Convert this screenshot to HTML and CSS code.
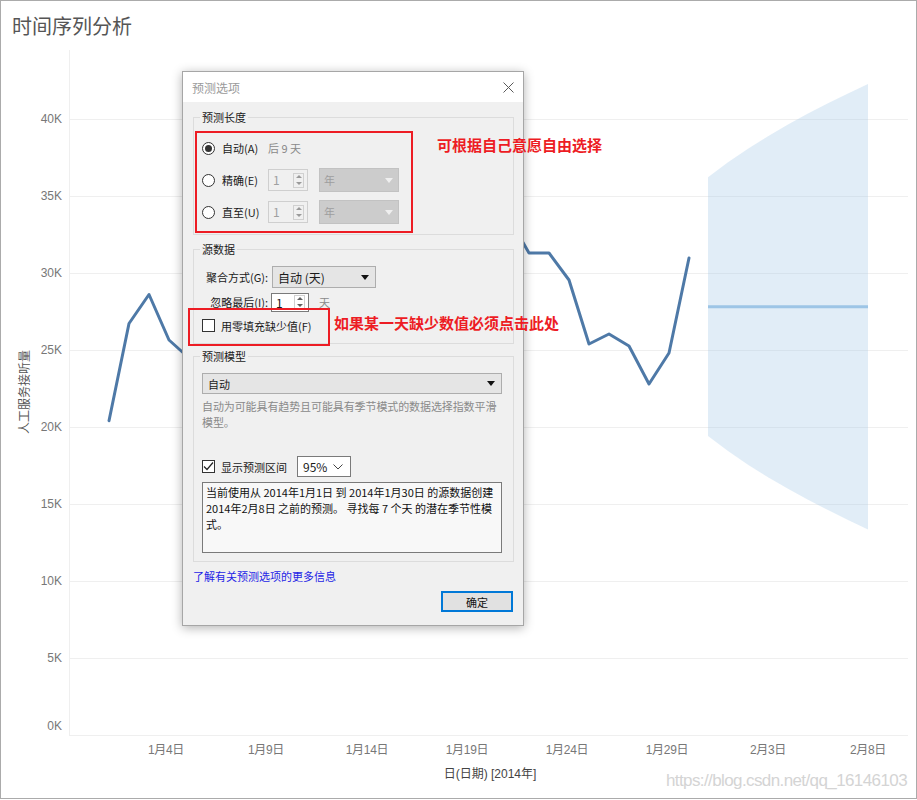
FILE: index.html
```html
<!DOCTYPE html>
<html lang="zh-CN">
<head>
    <meta charset="UTF-8">
    <meta name="viewport" content="width=device-width, initial-scale=1.0">
    <title>时间序列分析</title>
    <link rel="stylesheet" href="styles.css">
</head>
<body>
    <div class="frame">
        <div class="sheet-title">时间序列分析</div>

        <svg class="chart" width="915" height="748" viewBox="1 50 915 748">
            <!-- grid -->
            <g class="grid">
                <line x1="69.5" x2="69.5" y1="50" y2="736"/>
                <line x1="69" x2="908" y1="119.5" y2="119.5"/>
                <line x1="69" x2="908" y1="196.5" y2="196.5"/>
                <line x1="69" x2="908" y1="273.5" y2="273.5"/>
                <line x1="69" x2="908" y1="350.5" y2="350.5"/>
                <line x1="69" x2="908" y1="427.5" y2="427.5"/>
                <line x1="69" x2="908" y1="504.5" y2="504.5"/>
                <line x1="69" x2="908" y1="581.5" y2="581.5"/>
                <line x1="69" x2="908" y1="658.5" y2="658.5"/>
                <line x1="69" x2="908" y1="735.5" y2="735.5"/>
            </g>

            <g class="axis-value">
                <text x="62" y="123">40K</text>
                <text x="62" y="200">35K</text>
                <text x="62" y="277">30K</text>
                <text x="62" y="354">25K</text>
                <text x="62" y="431">20K</text>
                <text x="62" y="508">15K</text>
                <text x="62" y="585">10K</text>
                <text x="62" y="662">5K</text>
                <text x="62" y="730">0K</text>
            </g>
            <text class="axis-title" transform="translate(29 392) rotate(-90)">人工服务接听量</text>

            <g class="axis-date">
                <text x="166" y="754">1月4日</text>
                <text x="266" y="754">1月9日</text>
                <text x="367" y="754">1月14日</text>
                <text x="467" y="754">1月19日</text>
                <text x="567" y="754">1月24日</text>
                <text x="667" y="754">1月29日</text>
                <text x="768" y="754">2月3日</text>
                <text x="868" y="754">2月8日</text>
            </g>
            <text class="axis-title axis-title-x" x="490" y="778">日(日期) [2014年]</text>

            <!-- forecast -->
            <polygon class="band" points="708,177.3 728,162.3 748,148.7 768,136.2 788,124.6 808,113.6 828,103.3 848,93.4 868,84 868,529.4 848,520 828,510.1 808,499.8 788,488.8 768,477.2 748,464.7 728,451.1 708,436.1"/>
            <line class="forecast" x1="708" x2="868" y1="306.7" y2="306.7"/>

            <polyline class="series" points="109,420.7 129,323.5 149,294.5 169,340 189,358 209,345 229,300 249,272 269,286 289,330 309,348 329,318 349,292 369,278 389,300 409,338 429,330 449,282 469,244 489,232 509,218 529,253 549,253 569,280 589,344 609,334 629,346 649,384 669,353 689,258"/>

            <text class="watermark" x="907" y="786">https://blog.csdn.net/qq_16146103</text>
        </svg>

        <div class="dialog">
            <div class="dialog-titlebar">
                <span class="dialog-title">预测选项</span>
                <svg class="dialog-close" width="11" height="11" viewBox="0 0 11 11">
                    <path d="M0.5 0.5L10.5 10.5M10.5 0.5L0.5 10.5" stroke="#5a5a5a" stroke-width="1"/>
                </svg>
            </div>

            <div class="dialog-body">
                <fieldset class="group group-length">
                    <legend>预测长度</legend>
                    <div class="option-row">
                        <span class="radio checked"></span>
                        <span class="option-label">自动(A)</span>
                        <span class="hint">后 9 天</span>
                    </div>
                    <div class="option-row">
                        <span class="radio"></span>
                        <span class="option-label">精确(E)</span>
                        <span class="spin disabled">
                            <span class="spin-value">1</span>
                            <span class="spin-buttons"><span class="arrow-up"></span><span class="arrow-down"></span></span>
                        </span>
                        <span class="combo combo-unit disabled">年<span class="combo-arrow"></span></span>
                    </div>
                    <div class="option-row">
                        <span class="radio"></span>
                        <span class="option-label">直至(U)</span>
                        <span class="spin disabled">
                            <span class="spin-value">1</span>
                            <span class="spin-buttons"><span class="arrow-up"></span><span class="arrow-down"></span></span>
                        </span>
                        <span class="combo combo-unit disabled">年<span class="combo-arrow"></span></span>
                    </div>
                </fieldset>

                <fieldset class="group group-source">
                    <legend>源数据</legend>
                    <div class="field-row">
                        <span class="field-label">聚合方式(G):</span>
                        <span class="combo combo-agg">自动 (天)<span class="combo-arrow"></span></span>
                    </div>
                    <div class="field-row field-row-ignore">
                        <span class="field-label">忽略最后(I):</span>
                        <span class="spin spin-ignore">
                            <span class="spin-value">1</span>
                            <span class="spin-buttons"><span class="arrow-up"></span><span class="arrow-down"></span></span>
                        </span>
                        <span class="unit">天</span>
                    </div>
                    <div class="check-row check-row-fill">
                        <span class="checkbox"></span>
                        <span>用零填充缺少值(F)</span>
                    </div>
                </fieldset>

                <fieldset class="group group-model">
                    <legend>预测模型</legend>
                    <span class="combo combo-model">自动<span class="combo-arrow"></span></span>
                    <p class="model-desc">自动为可能具有趋势且可能具有季节模式的数据选择指数平滑<br>模型。</p>
                    <div class="check-row check-row-interval">
                        <span class="checkbox checked">
                            <svg width="11" height="11" viewBox="0 0 11 11"><path d="M1 5.5L4 8.5L10 1.5" fill="none" stroke="#222" stroke-width="1.2"/></svg>
                        </span>
                        <span>显示预测区间</span>
                        <span class="select-level">95%
                            <svg width="10" height="6" viewBox="0 0 10 6"><path d="M0.5 0.5L5 5L9.5 0.5" fill="none" stroke="#444" stroke-width="1"/></svg>
                        </span>
                    </div>
                    <div class="summary">当前使用从 2014年1月1日 到 2014年1月30日 的源数据创建<br>2014年2月8日 之前的预测。 寻找每 7 个天 的潜在季节性模<br>式。</div>
                </fieldset>

                <a class="more-link" href="#">了解有关预测选项的更多信息</a>
                <button class="btn-ok" type="button">确定</button>
            </div>

            <div class="mark mark-length"></div>
            <div class="mark mark-fill"></div>
        </div>

        <div class="note note-length">可根据自己意愿自由选择</div>
        <div class="note note-fill">如果某一天缺少数值必须点击此处</div>
    </div>
</body>
</html>
```

FILE: styles.css
```css
body {
    margin: 0;
    font-family: "Noto Sans CJK SC", sans-serif;
    background: #fff;
}

.frame {
    position: relative;
    width: 917px;
    height: 799px;
    box-sizing: border-box;
    border: 1px solid #ababab;
    background: #fff;
    overflow: hidden;
}

.sheet-title {
    height: 49px;
    line-height: 49px;
    padding-left: 11px;
    font-size: 20px;
    color: #555;
}

/* chart */
.chart {
    display: block;
}

.chart text {
    font-family: "Liberation Sans", "Noto Sans CJK SC", sans-serif;
}

.grid line {
    stroke: #efefef;
    stroke-width: 1;
}

.axis-value text {
    font-size: 12px;
    fill: #777;
    text-anchor: end;
}

.axis-title {
    font-size: 12px;
    fill: #555;
    text-anchor: middle;
}

.axis-date text {
    font-size: 12px;
    fill: #777;
    text-anchor: middle;
    letter-spacing: -0.3px;
}

.axis-title-x {
    fill: #444;
}

.band {
    fill: #a8cbe9;
    fill-opacity: 0.35;
}

.forecast {
    stroke: #9dc5e6;
    stroke-width: 3;
}

.series {
    fill: none;
    stroke: #4e79a7;
    stroke-width: 3;
    stroke-linejoin: round;
    stroke-linecap: round;
}

.watermark {
    font-size: 17px;
    fill: #d4d4d4;
    text-anchor: end;
    letter-spacing: -0.6px;
}

/* dialog */
.dialog {
    position: absolute;
    left: 181px;
    top: 70px;
    width: 342px;
    height: 555px;
    box-sizing: border-box;
    border: 1px solid #a6a6a6;
    background: #f0f0f0;
    box-shadow: 0 2px 10px rgba(0, 0, 0, 0.3);
    font-size: 11px;
    color: #1a1a1a;
    display: flex;
    flex-direction: column;
}

.dialog-titlebar {
    flex-shrink: 0;
    height: 30px;
    background: #fff;
    display: flex;
    align-items: center;
    justify-content: space-between;
    padding: 0 9px;
}

.dialog-title {
    font-size: 12px;
    color: #9a9a9a;
}

.dialog-close {
    display: block;
}

.dialog-body {
    flex: 1;
    display: flex;
    flex-direction: column;
    padding: 0 9px 12px 10px;
}

.group {
    margin: 0;
    border: 1px solid #dcdcdc;
    min-width: 0;
}

.group legend {
    font-size: 11px;
    line-height: 16px;
    padding: 0 2px;
    margin-left: -2px;
}

.group-length {
    margin-top: 7px;
    padding: 12px 11px 11px 8px;
}

.group-source {
    margin-top: 6px;
    padding: 9px 11px 11px 8px;
}

.group-model {
    margin-top: 4px;
    padding: 9px 11px 8px 8px;
    display: flex;
    flex-direction: column;
}

.option-row {
    display: flex;
    align-items: center;
    height: 22px;
    line-height: 16px;
}

.option-row + .option-row {
    margin-top: 10px;
}

.radio {
    width: 13px;
    height: 13px;
    box-sizing: border-box;
    border: 1px solid #333;
    border-radius: 50%;
    background: #fff;
    margin-right: 7px;
    display: flex;
    align-items: center;
    justify-content: center;
}

.radio.checked::after {
    content: "";
    width: 7px;
    height: 7px;
    border-radius: 50%;
    background: #333;
}

.option-label {
    width: 46px;
}

.hint,
.unit {
    color: #8a8a8a;
}

.spin {
    width: 40px;
    height: 22px;
    box-sizing: border-box;
    border: 1px solid #7a7a7a;
    background: #fff;
    display: flex;
    align-items: center;
}

.spin.disabled {
    border-color: #cfcfcf;
    background: #f0f0f0;
    color: #a0a0a0;
}

.spin-value {
    flex: 1;
    padding-left: 4px;
    font-size: 12px;
}

.spin-buttons {
    width: 11px;
    height: 15px;
    margin-right: 3px;
    box-sizing: border-box;
    border: 1px solid #d0d0d0;
    display: flex;
    flex-direction: column;
    align-items: center;
    justify-content: space-around;
}

.arrow-up {
    border-left: 3px solid transparent;
    border-right: 3px solid transparent;
    border-bottom: 3px solid #606060;
}

.arrow-down {
    border-left: 3px solid transparent;
    border-right: 3px solid transparent;
    border-top: 3px solid #606060;
}

.spin.disabled .arrow-up {
    border-bottom-color: #9a9a9a;
}

.spin.disabled .arrow-down {
    border-top-color: #9a9a9a;
}

.combo {
    box-sizing: border-box;
    border: 1px solid #adadad;
    background: #e5e5e5;
    display: flex;
    align-items: center;
    justify-content: space-between;
    padding: 0 6px 0 5px;
}

.combo-arrow {
    border-left: 4px solid transparent;
    border-right: 4px solid transparent;
    border-top: 5px solid #111;
}

.combo.disabled {
    background: #cccccc;
    border-color: #c2c2c2;
    color: #9e9e9e;
}

.combo.disabled .combo-arrow {
    border-top-color: #efefef;
}

.combo-unit {
    width: 80px;
    height: 24px;
    margin-left: 11px;
    padding-left: 4px;
    padding-right: 5px;
}

.field-row {
    display: flex;
    align-items: center;
    height: 22px;
}

.field-row-ignore {
    margin-top: 4px;
    height: 20px;
}

.field-label {
    width: 66px;
    text-align: right;
    margin-right: 4px;
}

.combo-agg {
    width: 104px;
    height: 22px;
    font-size: 12px;
}

.spin-ignore {
    width: 38px;
    height: 19px;
    margin-left: -1px;
}

.unit {
    margin-left: 10px;
}

.check-row {
    display: flex;
    align-items: center;
}

.check-row-fill {
    margin-top: 7px;
    height: 13px;
}

.checkbox {
    width: 13px;
    height: 13px;
    box-sizing: border-box;
    border: 1px solid #333;
    background: #fff;
    margin-right: 6px;
    display: flex;
    align-items: center;
    justify-content: center;
}

.checkbox svg {
    display: block;
}

.combo-model {
    height: 21px;
    font-size: 11px;
}

.model-desc {
    margin: 4px 0 0;
    line-height: 16px;
    color: #8a8a8a;
    letter-spacing: -0.1px;
}

.check-row-interval {
    margin-top: 26px;
    height: 21px;
}

.select-level {
    width: 54px;
    height: 21px;
    box-sizing: border-box;
    margin-left: 10px;
    border: 1px solid #7a7a7a;
    background: #fff;
    display: flex;
    align-items: center;
    justify-content: space-between;
    padding: 0 7px 0 5px;
    font-size: 12px;
}

.summary {
    margin-top: 5px;
    height: 71px;
    box-sizing: border-box;
    border: 1px solid #7a7a7a;
    background: #f8f8f8;
    padding: 1px 3px;
    line-height: 16px;
    color: #111;
}

.more-link {
    margin-top: 7px;
    line-height: 14px;
    color: #2424e6;
    text-decoration: none;
}

.btn-ok {
    align-self: flex-end;
    margin: 8px 1px 0 0;
    width: 72px;
    height: 21px;
    box-sizing: border-box;
    border: 2px solid #0078d7;
    background: #e1e1e1;
    font-family: inherit;
    font-size: 11px;
    color: #111;
    padding: 0;
}

/* red annotation marks */
.mark {
    position: absolute;
    box-sizing: border-box;
    border: 2px solid #ed1c24;
}

.mark-length {
    left: 12px;
    top: 59px;
    width: 218px;
    height: 102px;
}

.mark-fill {
    left: 5px;
    top: 236px;
    width: 142px;
    height: 38px;
}

.note {
    position: absolute;
    font-size: 15px;
    line-height: 18px;
    font-weight: bold;
    color: #ed1c24;
    white-space: nowrap;
}

.note-length {
    left: 436px;
    top: 135px;
}

.note-fill {
    left: 333px;
    top: 313px;
}
```
